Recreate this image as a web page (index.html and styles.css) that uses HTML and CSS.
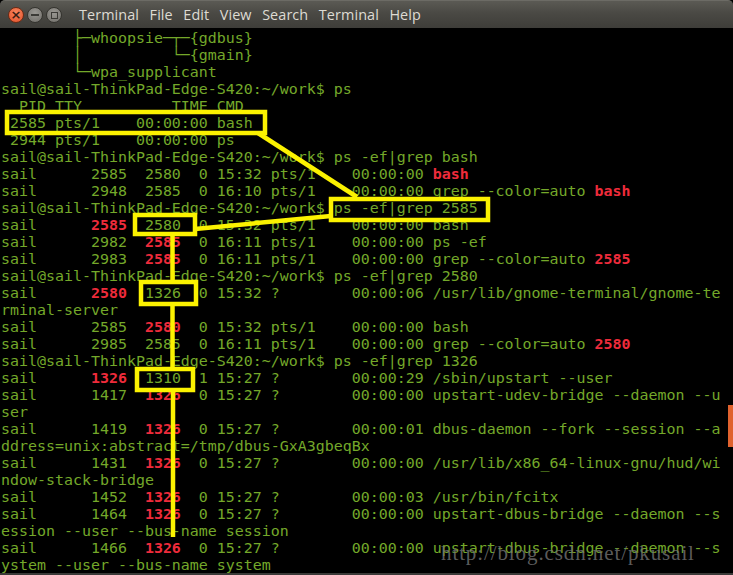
FILE: index.html
```html
<!DOCTYPE html>
<html lang="en">
<head>
    <meta charset="UTF-8">
    <title>Terminal</title>
    <link rel="stylesheet" href="styles.css">
</head>
<body>
    <div class="window">
        <div class="titlebar">
            <div class="buttons">
                <span class="btn close">&times;</span>
                <span class="btn min"><i class="bar"></i></span>
                <span class="btn max"><i class="box"></i></span>
            </div>
            <nav class="menu">
                <span>Terminal</span>
                <span>File</span>
                <span>Edit</span>
                <span>View</span>
                <span>Search</span>
                <span>Terminal</span>
                <span>Help</span>
            </nav>
        </div>

        <div class="term">
            <div class="screen">
                <div class="ln">        ├─whoopsie─┬─{gdbus}</div>
                <div class="ln">        │          └─{gmain}</div>
                <div class="ln">        └─wpa_supplicant</div>
                <div class="ln">sail@sail-ThinkPad-Edge-S420:~/work$ ps</div>
                <div class="ln">  PID TTY          TIME CMD</div>
                <div class="ln"> 2585 pts/1    00:00:00 bash</div>
                <div class="ln"> 2944 pts/1    00:00:00 ps</div>
                <div class="ln">sail@sail-ThinkPad-Edge-S420:~/work$ ps -ef|grep bash</div>
                <div class="ln">sail      2585  2580  0 15:32 pts/1    00:00:00 <b class="hl">bash</b></div>
                <div class="ln">sail      2948  2585  0 16:10 pts/1    00:00:00 grep --color=auto <b class="hl">bash</b></div>
                <div class="ln">sail@sail-ThinkPad-Edge-S420:~/work$ ps -ef|grep 2585</div>
                <div class="ln">sail      <b class="hl">2585</b>  2580  0 15:32 pts/1    00:00:00 bash</div>
                <div class="ln">sail      2982  <b class="hl">2585</b>  0 16:11 pts/1    00:00:00 ps -ef</div>
                <div class="ln">sail      2983  <b class="hl">2585</b>  0 16:11 pts/1    00:00:00 grep --color=auto <b class="hl">2585</b></div>
                <div class="ln">sail@sail-ThinkPad-Edge-S420:~/work$ ps -ef|grep 2580</div>
                <div class="ln">sail      <b class="hl">2580</b>  1326  0 15:32 ?        00:00:06 /usr/lib/gnome-terminal/gnome-te</div>
                <div class="ln">rminal-server</div>
                <div class="ln">sail      2585  <b class="hl">2580</b>  0 15:32 pts/1    00:00:00 bash</div>
                <div class="ln">sail      2985  2585  0 16:11 pts/1    00:00:00 grep --color=auto <b class="hl">2580</b></div>
                <div class="ln">sail@sail-ThinkPad-Edge-S420:~/work$ ps -ef|grep 1326</div>
                <div class="ln">sail      <b class="hl">1326</b>  1310  1 15:27 ?        00:00:29 /sbin/upstart --user</div>
                <div class="ln">sail      1417  <b class="hl">1326</b>  0 15:27 ?        00:00:00 upstart-udev-bridge --daemon --u</div>
                <div class="ln">ser</div>
                <div class="ln">sail      1419  <b class="hl">1326</b>  0 15:27 ?        00:00:01 dbus-daemon --fork --session --a</div>
                <div class="ln">ddress=unix:abstract=/tmp/dbus-GxA3gbeqBx</div>
                <div class="ln">sail      1431  <b class="hl">1326</b>  0 15:27 ?        00:00:00 /usr/lib/x86_64-linux-gnu/hud/wi</div>
                <div class="ln">ndow-stack-bridge</div>
                <div class="ln">sail      1452  <b class="hl">1326</b>  0 15:27 ?        00:00:03 /usr/bin/fcitx</div>
                <div class="ln">sail      1464  <b class="hl">1326</b>  0 15:27 ?        00:00:00 upstart-dbus-bridge --daemon --s</div>
                <div class="ln">ession --user --bus-name session</div>
                <div class="ln">sail      1466  <b class="hl">1326</b>  0 15:27 ?        00:00:00 upstart-dbus-bridge --daemon --s</div>
                <div class="ln">ystem --user --bus-name system</div>
            </div>
            <div class="scrollbar"><div class="thumb"></div></div>
        </div>

        <!-- yellow marks drawn over the screenshot -->
        <svg class="marks" width="733" height="575" viewBox="0 0 733 575">
            <g fill="none" stroke="#fbf200" stroke-width="4.5">
                <rect x="7" y="112" width="258" height="21"/>
                <rect x="331" y="199" width="157" height="21"/>
                <rect x="135" y="215" width="60" height="19"/>
                <rect x="141" y="282" width="55" height="22"/>
                <rect x="137" y="369" width="56" height="21"/>
                <line x1="258" y1="133" x2="357" y2="197"/>
                <line x1="195" y1="229" x2="331" y2="216"/>
                <line x1="172.5" y1="236" x2="172.5" y2="280"/>
                <line x1="172.5" y1="306" x2="172.5" y2="367"/>
                <line x1="173" y1="392" x2="173" y2="537"/>
            </g>
        </svg>

        <div class="watermark">http://blog.csdn.net/pkusail</div>
    </div>
</body>
</html>
```

FILE: styles.css
```css
* { margin: 0; padding: 0; box-sizing: border-box; }
body {
    background: #000;
    width: 733px;
    height: 575px;
    overflow: hidden;
}
.window {
    position: relative;
    width: 733px;
    height: 575px;
    display: flex;
    flex-direction: column;
    background: #000;
    border-bottom: 2px solid #3a3a38;
}
.titlebar {
    height: 28px;
    flex: none;
    display: flex;
    align-items: center;
    padding-left: 8px;
    background: linear-gradient(#5b5a54 0%, #4a4944 45%, #3e3d39 100%);
    border-top: 1px solid #6c6b65;
    border-radius: 5px 5px 0 0;
}
.buttons {
    display: flex;
    gap: 3px;
    margin-top: 1px;
}
.btn {
    width: 16px;
    height: 16px;
    border-radius: 50%;
    display: flex;
    align-items: center;
    justify-content: center;
    background: radial-gradient(circle at 50% 35%, #9a9893, #6f6d68);
    border: 1px solid #35342f;
}
.btn.close {
    background: radial-gradient(circle at 50% 35%, #f9875f, #e2502a);
    border-color: #6b2b15;
    color: #3a1d12;
    font: bold 13px/1 "DejaVu Sans", sans-serif;
    padding-bottom: 1px;
}
.btn .bar {
    width: 8px;
    height: 2px;
    background: #3b3a36;
}
.btn .box {
    width: 7px;
    height: 7px;
    border: 1.5px solid #3b3a36;
}
.menu {
    display: flex;
    gap: 10.5px;
    margin-left: 17px;
    color: #dedbd3;
    font-family: "Open Sans", "Noto Sans", sans-serif;
    font-size: 14.4px;
    letter-spacing: 0.1px;
}
.term {
    flex: 1;
    display: flex;
    min-height: 0;
}
.screen {
    flex: 1;
    padding: 1.5px 0 0 1px;
    font-family: "DejaVu Sans Mono", monospace;
    font-size: 14.95px;
    line-height: 17px;
    color: #74a82a;
    overflow: hidden;
}
.ln {
    white-space: pre;
    height: 17px;
}
.hl {
    color: #ee2b3b;
    font-weight: bold;
}
.scrollbar {
    width: 5px;
    flex: none;
    padding-top: 377px;
}
.thumb {
    height: 42px;
    background: #e0622e;
}
.marks {
    position: absolute;
    left: 0;
    top: 0;
}
.watermark {
    position: absolute;
    left: 441px;
    top: 541px;
    font-family: "Liberation Serif", serif;
    font-size: 21px;
    letter-spacing: 0.9px;
    color: rgba(170, 170, 170, 0.55);
    text-shadow: 0 0 1px rgba(0, 0, 0, 0.6);
}
```
